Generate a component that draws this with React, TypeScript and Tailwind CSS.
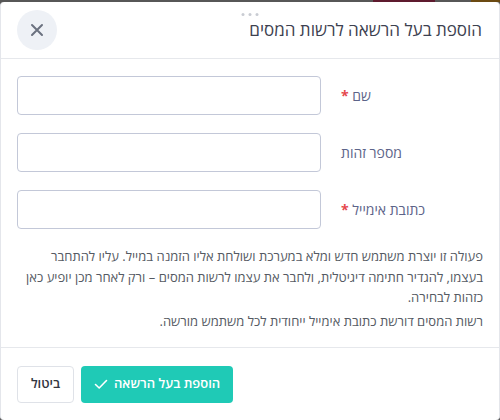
import React from "react";

const fieldRows = [
  { label: "שם", required: true },
  { label: "מספר זהות", required: false },
  { label: "כתובת אימייל", required: true },
];

function CloseIcon() {
  return (
    <svg width="14" height="14" viewBox="0 0 14 14" fill="none">
      <path d="M2 2L12 12M12 2L2 12" stroke="#6b7280" strokeWidth="2" strokeLinecap="round" />
    </svg>
  );
}

function CheckIcon() {
  return (
    <svg width="14" height="14" viewBox="0 0 14 14" fill="none">
      <path d="M1.5 7.5L5.2 11L12.5 3.5" stroke="white" strokeWidth="1.6" strokeLinecap="round" strokeLinejoin="round" />
    </svg>
  );
}

export default function App() {
  return (
    <div
      className="w-[500px] h-[420px] bg-[#575757] flex flex-col overflow-hidden"
      style={{ fontFamily: '"Open Sans", "Liberation Sans", sans-serif' }}
    >
      {/* page behind the dialog, peeking out at the top */}
      <div className="h-[2px] flex shrink-0">
        <div className="flex-1 bg-[#575757]" />
        <div className="w-[62px] bg-[#5e1a2e]" />
        <div className="w-[36px] bg-[#575757]" />
        <div className="w-[29px] bg-[#6b4a12]" />
      </div>

      <div dir="rtl" className="flex-1 bg-white rounded-[4px] border-x border-[#e4e6eb] flex flex-col relative">
        {/* drag handle */}
        <div className="absolute top-[11px] left-1/2 -translate-x-1/2 flex gap-[4px]">
          <span className="w-[3px] h-[3px] rounded-full bg-[#c9ccd3]" />
          <span className="w-[3px] h-[3px] rounded-full bg-[#c9ccd3]" />
          <span className="w-[3px] h-[3px] rounded-full bg-[#c9ccd3]" />
        </div>

        <div className="h-[57px] flex items-center justify-between pr-[17px] pl-[16px] border-b border-[#e6e8ec]">
          <h2 className="text-[17px] text-[#3d4150] font-normal">הוספת בעל הרשאה לרשות המסים</h2>
          <button className="w-[40px] h-[40px] rounded-full bg-[#eef1f6] flex items-center justify-center">
            <CloseIcon />
          </button>
        </div>

        <div className="pt-[17px] px-[16px] pb-[16px] flex flex-col border-b border-[#e6e8ec]">
          <div className="flex flex-col gap-[18px]">
            {fieldRows.map((f) => (
              <div key={f.label} className="flex items-center gap-[20px]">
                <label className="w-[142px] text-left text-[14px] text-[#5d6489]">
                  {f.label}
                  {f.required && <span className="text-[#e5484d] font-bold"> *</span>}
                </label>
                <input className="w-[304px] h-[39px] rounded-[4px] border border-[#c3c8d8] bg-white outline-none" />
              </div>
            ))}
          </div>

          <p className="mt-[17px] text-[13px] leading-[20.5px] text-[#555a63]">
            פעולה זו יוצרת משתמש חדש ומלא במערכת ושולחת אליו הזמנה במייל. עליו להתחבר בעצמו, להגדיר חתימה דיגיטלית, ולחבר את עצמו לרשות המסים – ורק לאחר מכן יופיע כאן כזהות לבחירה.
          </p>
          <p className="mt-[3px] text-[13px] leading-[20.5px] text-[#555a63]">
            רשות המסים דורשת כתובת אימייל ייחודית לכל משתמש מורשה.
          </p>
        </div>

        <div className="flex-1 flex items-center justify-end gap-[7px] px-[16px]">
          <button className="h-[37px] px-[13px] rounded-[4px] bg-[#1fcab6] text-white text-[13px] font-semibold flex items-center gap-[6px]">
            <span>הוספת בעל הרשאה</span>
            <CheckIcon />
          </button>
          <button className="h-[37px] w-[57px] rounded-[4px] border border-[#dfe2e8] bg-white text-[#33363f] text-[13px] font-semibold">
            ביטול
          </button>
        </div>
      </div>
    </div>
  );
}
